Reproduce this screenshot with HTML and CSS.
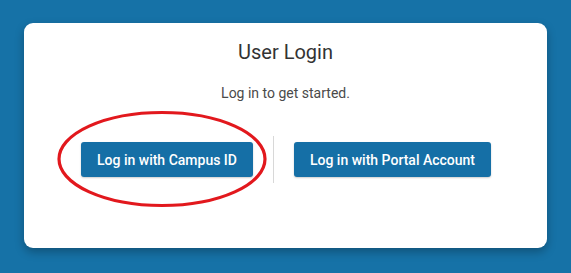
FILE: index.html
```html
<!DOCTYPE html>
<html>
<head>
<meta charset="utf-8">
<link rel="stylesheet" href="styles.css">
</head>
<body>
<div class="page">
  <div class="card">
    <h1 class="title">User Login</h1>
    <p class="subtitle">Log in to get started.</p>
    <div class="actions">
      <button class="btn">Log in with Campus ID</button>
      <span class="divider"></span>
      <button class="btn">Log in with Portal Account</button>
    </div>
    <svg class="annotation" width="212" height="100" viewBox="0 0 212 100">
      <ellipse cx="106" cy="50" rx="103" ry="46.5" fill="none" stroke="#e2181d" stroke-width="3.2"/>
    </svg>
  </div>
</div>
</body>
</html>
```
FILE: styles.css
```css
html, body {
  margin: 0;
  padding: 0;
  background: #1672a7;
  font-family: Roboto, "Liberation Sans", sans-serif;
}
.page {
  padding: 23px 24px 25px 24px;
  height: 273px;
  box-sizing: border-box;
}
.card {
  position: relative;
  width: 523px;
  height: 225px;
  box-sizing: border-box;
  background: #fff;
  border-radius: 9px;
  box-shadow: 0 4px 10px rgba(0, 0, 0, 0.28);
  padding-top: 18px;
  display: flex;
  flex-direction: column;
  align-items: center;
}
.title {
  margin: 0;
  font-size: 20px;
  font-weight: 400;
  color: #333;
  line-height: 23px;
}
.subtitle {
  margin: 21px 0 0 0;
  font-size: 14px;
  font-weight: 400;
  color: #4a4a4a;
  line-height: 16px;
}
.actions {
  margin-top: 35px;
  display: flex;
  align-items: center;
  gap: 20px;
  margin-left: 1px;
}
.divider {
  width: 1px;
  height: 47px;
  background: #d8d8d8;
}
.btn {
  height: 35px;
  padding: 0 16px;
  border: none;
  border-radius: 3px;
  background: #156fa6;
  color: #fff;
  font-family: Roboto, "Liberation Sans", sans-serif;
  font-size: 14px;
  font-weight: 500;
  box-shadow: 0 1px 2px rgba(0, 0, 0, 0.2);
}
.annotation {
  position: absolute;
  left: 32px;
  top: 86px;
}
```
